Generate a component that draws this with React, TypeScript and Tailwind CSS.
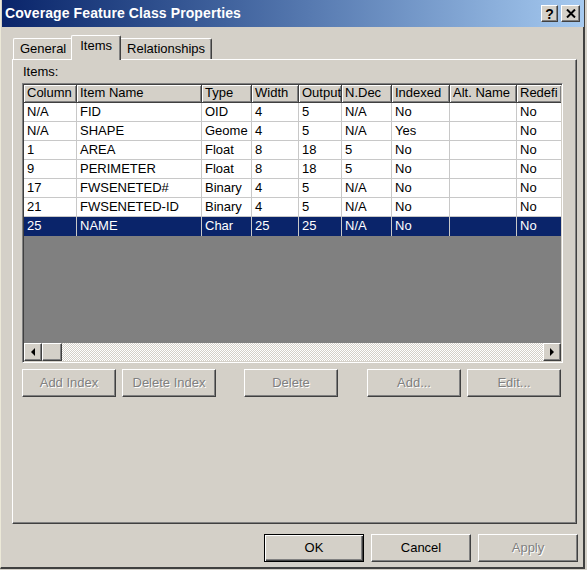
const cols = [
  { label: "Column", w: "w-[53px]" },
  { label: "Item Name", w: "w-[125px]" },
  { label: "Type", w: "w-[50px]" },
  { label: "Width", w: "w-[47px]" },
  { label: "Output", w: "w-[43px]" },
  { label: "N.Dec", w: "w-[50px]" },
  { label: "Indexed", w: "w-[58px]" },
  { label: "Alt. Name", w: "w-[67px]" },
  { label: "Redefi", w: "w-[45px]" },
]

const rows = [
  ["N/A", "FID", "OID", "4", "5", "N/A", "No", "", "No"],
  ["N/A", "SHAPE", "Geome", "4", "5", "N/A", "Yes", "", "No"],
  ["1", "AREA", "Float", "8", "18", "5", "No", "", "No"],
  ["9", "PERIMETER", "Float", "8", "18", "5", "No", "", "No"],
  ["17", "FWSENETED#", "Binary", "4", "5", "N/A", "No", "", "No"],
  ["21", "FWSENETED-ID", "Binary", "4", "5", "N/A", "No", "", "No"],
  ["25", "NAME", "Char", "25", "25", "N/A", "No", "", "No"],
]

const raised =
  "border border-t-white border-l-white border-r-[#404040] border-b-[#404040] shadow-[inset_-1px_-1px_0_#808080]"

function Btn({ label, w, disabled, def }: { label: string; w: string; disabled?: boolean; def?: boolean }) {
  return (
    <div
      className={`${w} h-[28px] flex items-center justify-center text-[13px] ${
        def
          ? "border border-black shadow-[inset_1px_1px_0_#fff,inset_-1px_-1px_0_#404040,inset_-2px_-2px_0_#808080]"
          : raised
      } ${disabled ? "text-[#808080] [text-shadow:1px_1px_0_#fff]" : "text-black"}`}
    >
      {label}
    </div>
  )
}

function Arrow({ dir }: { dir: "left" | "right" }) {
  return (
    <div className={`w-[18px] h-[18px] flex items-center justify-center bg-[#d4d0c8] ${raised}`}>
      <svg width="6" height="8" viewBox="0 0 6 8">
        {dir === "left" ? <polygon points="5,0 5,8 1,4" fill="#000" /> : <polygon points="1,0 1,8 5,4" fill="#000" />}
      </svg>
    </div>
  )
}

export default function App() {
  return (
    <div className="w-[587px] h-[570px] bg-[#d4d0c8] font-['Liberation_Sans',Arial,sans-serif] overflow-hidden">
      <div className="w-[585px] h-[569px] border-l border-l-[#ece9d8] border-r-2 border-r-[#404040] border-b-2 border-b-[#404040] flex flex-col">
        {/* title bar */}
        <div className="ml-px w-[582px] h-[27px] bg-gradient-to-r from-[#0a246a] to-[#a6caf0] flex items-center pl-[3px] pr-[4px]">
          <span className="text-white font-bold text-[14px] tracking-[0.1px]">Coverage Feature Class Properties</span>
          <div className="ml-auto flex gap-[3px]">
            <div className={`w-[17px] h-[17px] bg-[#d4d0c8] flex items-center justify-center text-[14px] font-bold leading-none ${raised}`}>
              ?
            </div>
            <div className={`w-[19px] h-[17px] bg-[#d4d0c8] flex items-center justify-center ${raised}`}>
              <svg width="10" height="9" viewBox="0 0 10 9">
                <path d="M1 0.5 L9 8.5 M9 0.5 L1 8.5" stroke="#000" strokeWidth="2" />
              </svg>
            </div>
          </div>
        </div>

        {/* tabs */}
        <div className="ml-[12px] mt-[8px] flex items-end h-[24px] text-[13px]">
          <div className="h-[21px] pl-[6px] pr-[5px] flex items-center border-l border-t border-white rounded-tl-[2px]">General</div>
          <div className="relative -mb-px h-[25px] px-[8px] pb-[4px] flex items-center bg-[#d4d0c8] border-l border-t border-white rounded-t-[2px] border-r border-r-[#404040] shadow-[inset_-1px_0_0_#808080]">
            Items
          </div>
          <div className="h-[21px] px-[6px] flex items-center border-t border-white border-r border-r-[#404040] shadow-[inset_-1px_0_0_#808080] rounded-tr-[2px]">
            Relationships
          </div>
        </div>

        {/* panel */}
        <div className="ml-[11px] w-[565px] h-[465px] border-l border-t border-white border-r border-b border-r-[#404040] border-b-[#404040] shadow-[inset_-1px_-1px_0_#808080] pl-[9px] flex flex-col">
          <div className="text-[13px] h-[23px] pt-[4px] pl-px leading-[16px]">Items:</div>
          <div className="w-[541px] h-[280px] border-t border-l border-[#808080] border-r border-b border-r-white border-b-white shadow-[inset_1px_1px_0_#404040] p-px flex flex-col">
            <div className="flex-1 flex flex-col bg-[#808080] overflow-hidden">
              <div className="flex h-[18px] bg-[#d4d0c8] shrink-0">
                {cols.map((c) => (
                  <div
                    key={c.label}
                    className={`${c.w} shrink-0 h-full text-[13px] leading-[16px] pl-[3px] whitespace-nowrap overflow-hidden border-r border-b border-[#404040] shadow-[inset_1px_1px_0_#fff,inset_-1px_-1px_0_#808080]`}
                  >
                    {c.label}
                  </div>
                ))}
              </div>
              {rows.map((r, i) => {
                const sel = i === rows.length - 1
                return (
                  <div key={i} className={`flex h-[19px] shrink-0 ${sel ? "bg-[#0a246a] text-white" : "bg-white text-black"}`}>
                    {r.map((v, j) => (
                      <div
                        key={j}
                        className={`${cols[j].w} shrink-0 h-full text-[13px] leading-[18px] pl-[3px] whitespace-nowrap overflow-hidden border-r border-[#c8c8c8] ${
                          sel ? "" : "border-b"
                        }`}
                      >
                        {v}
                      </div>
                    ))}
                  </div>
                )
              })}
              <div className="flex-1" />
              <div className="flex h-[18px] shrink-0 bg-[image:repeating-conic-gradient(#ffffff_0_25%,#d4d0c8_0_50%)] bg-[length:2px_2px]">
                <Arrow dir="left" />
                <div className={`w-[20px] h-[18px] bg-[#d4d0c8] ${raised}`} />
                <div className="flex-1" />
                <Arrow dir="right" />
              </div>
            </div>
          </div>
          <div className="flex mt-[6px] w-[541px]">
            <Btn label="Add Index" w="w-[94px]" disabled />
            <div className="w-[6px]" />
            <Btn label="Delete Index" w="w-[94px]" disabled />
            <div className="w-[28px]" />
            <Btn label="Delete" w="w-[94px]" disabled />
            <div className="w-[29px]" />
            <Btn label="Add..." w="w-[94px]" disabled />
            <div className="w-[6px]" />
            <Btn label="Edit..." w="w-[94px]" disabled />
          </div>
        </div>

        {/* dialog buttons */}
        <div className="flex mt-[10px] ml-[263px] gap-[7px]">
          <Btn label="OK" w="w-[100px]" def />
          <Btn label="Cancel" w="w-[100px]" />
          <Btn label="Apply" w="w-[100px]" disabled />
        </div>
      </div>
    </div>
  )
}
